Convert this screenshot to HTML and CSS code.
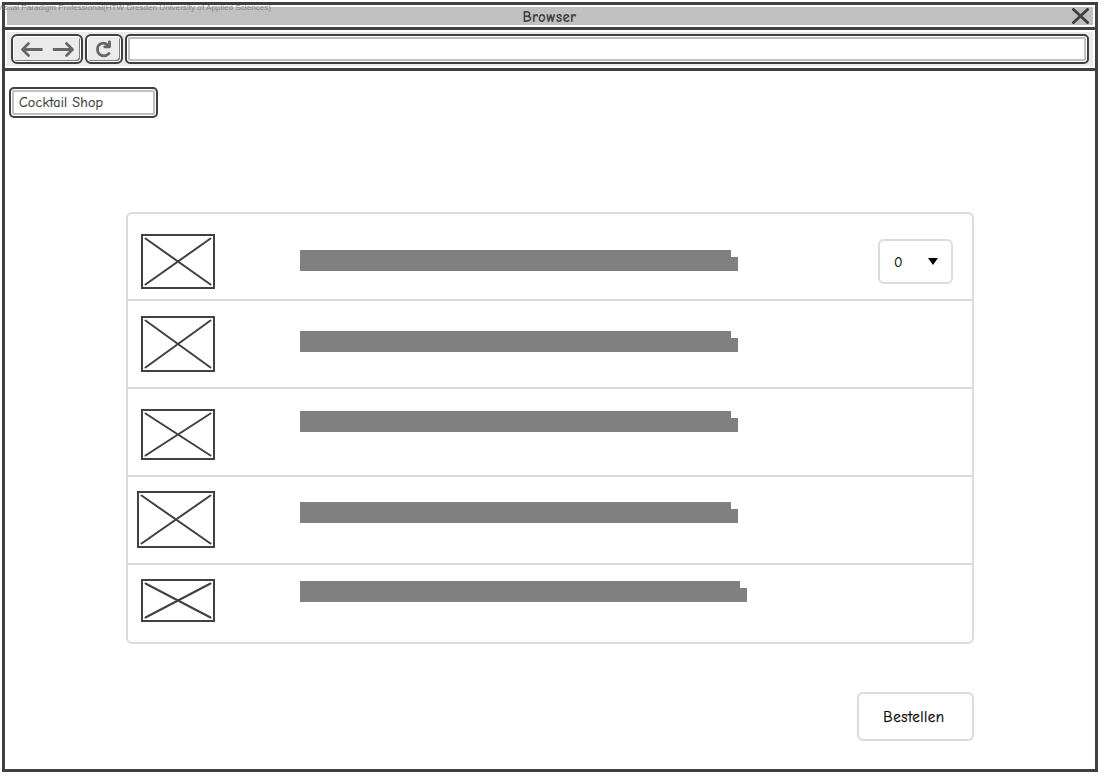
FILE: index.html
```html
<!DOCTYPE html>
<html lang="de">
<head>
<meta charset="utf-8">
<title>Cocktail Shop</title>
<link rel="stylesheet" href="styles.css">
</head>
<body>
<div class="watermark">Visual Paradigm Professional(HTW Dresden University of Applied Sciences)</div>
<div class="window">
  <header class="titlebar">
    <span class="title">Browser</span>
    <svg class="close" width="18" height="16" viewBox="0 0 18 16"><path d="M2.5 1.5L16.5 14.5M16.5 1.5L2.5 14.5"/></svg>
  </header>
  <nav class="toolbar">
    <div class="tool nav">
      <svg width="56" height="18" viewBox="0 0 56 18"><path d="M22.5 9.5H3.5M9.5 3.5L3.5 9.5L9.5 15.5M35 9.5H53.5M47.5 3.5L53.5 9.5L47.5 15.5"/></svg>
    </div>
    <div class="tool reload">
      <svg width="18" height="18" viewBox="0 0 18 18"><path d="M14 13.6C9.5 18 2.5 15.5 2.5 9.2C2.5 3.5 9.5 1 13 5.5M14.5 1.8V6.8H9.7"/></svg>
    </div>
    <div class="field address"></div>
  </nav>
  <main class="page">
    <div class="field shop"><span class="shop-name">Cocktail Shop</span></div>
    <section class="list">
      <div class="row first">
        <svg class="thumb t1" width="74" height="55"><rect x="1" y="1" width="72" height="53"/><path d="M4.5 4.5L69.5 50.5M69.5 4.5L4.5 50.5"/></svg>
        <div class="bar b1"></div>
        <div class="select"><span class="value">0</span><svg width="10" height="7" viewBox="0 0 10 7"><path class="caret" d="M0 0H10L5 7Z"/></svg></div>
      </div>
      <div class="row">
        <svg class="thumb t2" width="74" height="56"><rect x="1" y="1" width="72" height="54"/><path d="M4.5 4.5L69.5 51.5M69.5 4.5L4.5 51.5"/></svg>
        <div class="bar b2"></div>
      </div>
      <div class="row">
        <svg class="thumb t3" width="74" height="51"><rect x="1" y="1" width="72" height="49"/><path d="M4.5 4.5L69.5 46.5M69.5 4.5L4.5 46.5"/></svg>
        <div class="bar b3"></div>
      </div>
      <div class="row">
        <svg class="thumb t4" width="78" height="57"><rect x="1" y="1" width="76" height="55"/><path d="M4.5 4.5L73.5 52.5M73.5 4.5L4.5 52.5"/></svg>
        <div class="bar b4"></div>
      </div>
      <div class="row last">
        <svg class="thumb t5" width="74" height="43"><rect x="1" y="1" width="72" height="41"/><path d="M4.5 4.5L69.5 38.5M69.5 4.5L4.5 38.5"/></svg>
        <div class="bar b5"></div>
      </div>
    </section>
    <button class="order" type="button"><span class="order-label">Bestellen</span></button>
  </main>
</div>
</body>
</html>
```
FILE: styles.css
```css
* { box-sizing: border-box; }
body {
  margin: 0;
  padding: 2px;
  height: 776px;
  overflow: hidden;
  background: #fff;
  font-family: "Comic Sans MS", "Comic Neue", Lato, sans-serif;
}
svg { display: block; fill: none; stroke-linecap: round; stroke-linejoin: round; }

.watermark {
  position: absolute;
  left: -3px;
  top: 2px;
  font: 8px/11px "Liberation Sans", Arial, sans-serif;
  letter-spacing: 0.06px;
  color: #858585;
  white-space: nowrap;
}
.window {
  width: 1096px;
  height: 770px;
  border: 3px solid #404040;
}
.titlebar {
  display: flex;
  align-items: center;
  justify-content: flex-end;
  height: 25px;
  padding: 2px 6px 2px 2px;
  border-bottom: 3px solid #404040;
  background: #c0c0c0;
  background-clip: padding-box;
  box-shadow: inset 0 0 0 2px #fff;
}
.title {
  flex: 1;
  padding: 2px 0 0 21px;
  text-align: center;
  font-size: 15px;
  line-height: 20px;
  font-weight: 700;
  letter-spacing: 0.3px;
  color: #404040;
}
.close { stroke: #404040; stroke-width: 3; }

.toolbar {
  display: flex;
  gap: 2px;
  height: 41px;
  padding: 4px 6px;
  border-bottom: 3px solid #404040;
  background: #ebebeb;
  box-shadow: inset 0 0 0 2px #fff;
}
.tool {
  display: flex;
  align-items: center;
  justify-content: center;
  height: 30px;
  border: 2px solid #404040;
  border-radius: 6px;
  background: #ebebeb;
  box-shadow: inset 0 0 0 1px #fff, inset -2px -2px 0 #808080;
}
.tool svg { stroke: #666; stroke-width: 2.8; }
.nav { width: 72px; }
.reload { width: 38px; padding-right: 1px; }
.field {
  border: 2px solid #404040;
  border-radius: 5px;
  background: #fff;
  box-shadow: inset 0 0 0 1px #fff, inset 0 0 0 3px #c0c0c0;
}
.address { width: 964px; height: 30px; }

.shop {
  width: 149px;
  height: 31px;
  margin: 16px 0 0 4px;
  padding-left: 8px;
}
.shop-name {
  display: block;
  font-size: 14px;
  line-height: 28px;
  letter-spacing: 0.22px;
  color: #333;
  -webkit-text-stroke: 0.2px #333;
}
.list {
  width: 848px;
  height: 432px;
  margin: 94px 0 0 121px;
  border: 2px solid #dcdcdc;
  border-radius: 6px;
}
.row {
  display: grid;
  grid-template-columns: 172px 578px 75px;
  height: 88px;
  border-bottom: 2px solid #dcdcdc;
}
.row.first { height: 87px; }
.row.last { height: 77px; border-bottom: 0; }
.thumb { margin-left: 13px; stroke: #404040; stroke-width: 2; }
.thumb rect { stroke-linejoin: miter; }
.t1 { margin-top: 20px; }
.t2 { margin-top: 15px; }
.t3 { margin-top: 20px; }
.t4 { margin-top: 14px; margin-left: 9px; }
.t5 { margin-top: 14px; }
.bar {
  width: 438px;
  height: 21px;
  background: #808080;
  clip-path: polygon(0 0, calc(100% - 7px) 0, calc(100% - 7px) 7px, 100% 7px, 100% 100%, 0 100%);
}
.b1 { margin-top: 36px; }
.b2 { margin-top: 30px; }
.b3 { margin-top: 22px; }
.b4 { margin-top: 25px; }
.b5 { margin-top: 16px; width: 447px; }
.select {
  display: flex;
  align-items: center;
  justify-content: space-between;
  height: 45px;
  margin-top: 25px;
  padding: 0 13px 0 14px;
  border: 2px solid #dcdcdc;
  border-radius: 6px;
}
.value {
  padding-top: 2px;
  font-size: 14px;
  line-height: 20px;
  color: #000;
  -webkit-text-stroke: 0.2px #000;
}
.caret { fill: #000; }
.order {
  display: block;
  width: 117px;
  height: 49px;
  margin: 48px 0 0 852px;
  padding: 0 3px 0 0;
  border: 2px solid #dcdcdc;
  border-radius: 6px;
  background: #fff;
  font: inherit;
  font-size: 15px;
  line-height: 20px;
  color: #000;
  -webkit-text-stroke: 0.25px #000;
}
.order-label { letter-spacing: 0.5px; }
```
